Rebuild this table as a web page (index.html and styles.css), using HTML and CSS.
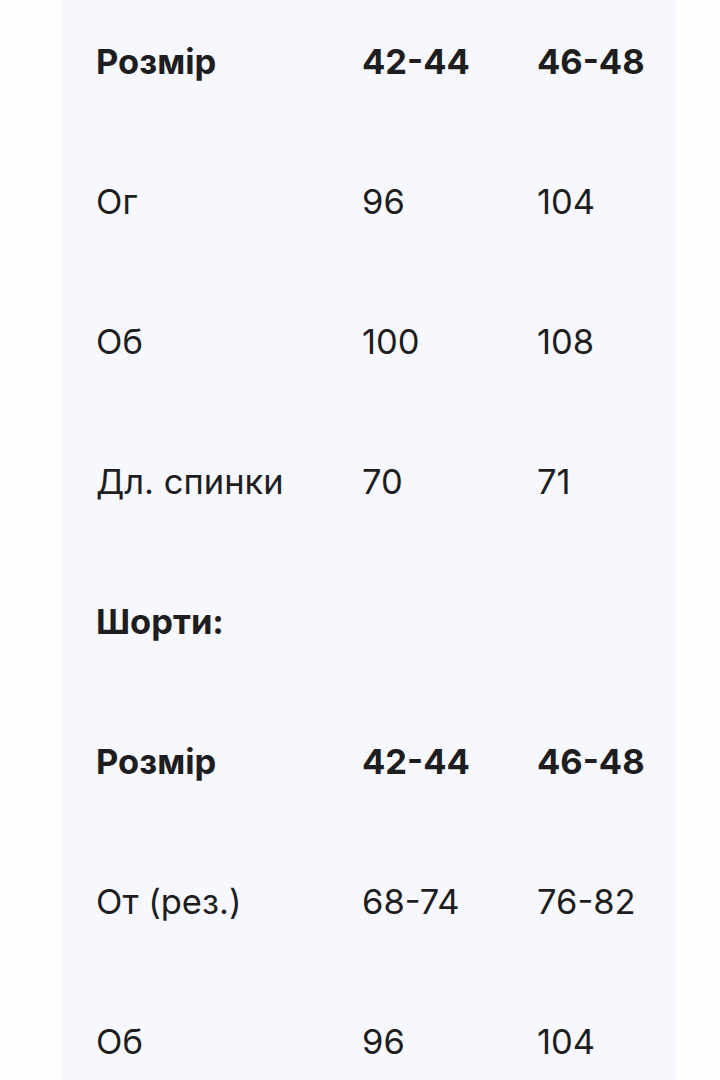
FILE: index.html
```html
<!DOCTYPE html>
<html lang="uk">
<head>
<meta charset="utf-8">
<link rel="stylesheet" href="styles.css">
</head>
<body>
<div class="page">
  <div class="panel">
    <div class="row head"><span>Розмір</span><span>42-44</span><span>46-48</span></div>
    <div class="row"><span>Ог</span><span>96</span><span>104</span></div>
    <div class="row"><span>Об</span><span>100</span><span>108</span></div>
    <div class="row"><span>Дл. спинки</span><span>70</span><span>71</span></div>
    <div class="row head"><span>Шорти:</span></div>
    <div class="row head"><span>Розмір</span><span>42-44</span><span>46-48</span></div>
    <div class="row"><span>От (рез.)</span><span>68-74</span><span>76-82</span></div>
    <div class="row"><span>Об</span><span>96</span><span>104</span></div>
  </div>
</div>
</body>
</html>
```
FILE: styles.css
```css
html, body {
  margin: 0;
  padding: 0;
  background: #fdfdfd;
}
.page {
  width: 720px;
  height: 1080px;
  overflow: hidden;
  display: flex;
}
.panel {
  margin-left: 62px;
  width: 614px;
  height: 1080px;
  background: #f7f8fd;
  padding-left: 34px;
  box-sizing: border-box;
  font-family: Inter, "Noto Sans", sans-serif;
  color: #1e1e20;
  font-size: 34.5px;
}
.row {
  display: grid;
  grid-template-columns: 266px 175px 1fr;
  height: 140px;
  box-sizing: border-box;
  padding-top: 41px;
  line-height: 1.2;
  white-space: nowrap;
}
.head {
  font-weight: 700;
}
```
